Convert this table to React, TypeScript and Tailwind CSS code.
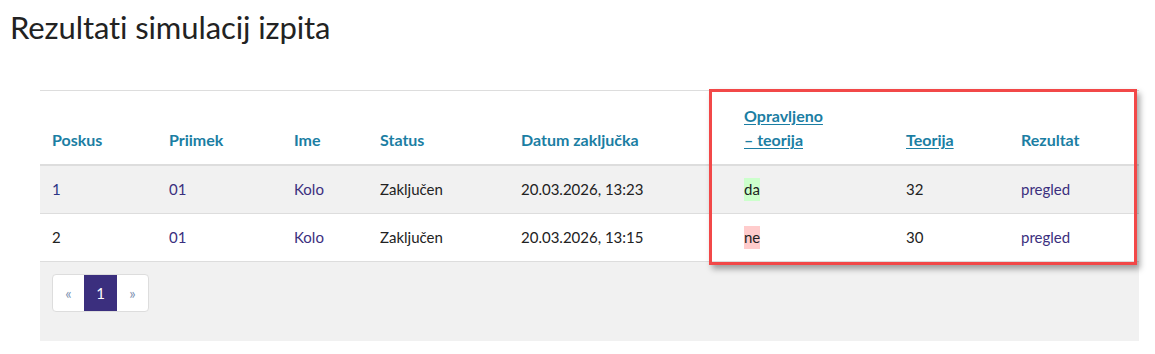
import React from "react";

const rows = [
  { poskus: "1", priimek: "01", ime: "Kolo", status: "Zaključen", datum: "20.03.2026, 13:23", opravljeno: "da", teorija: "32" },
  { poskus: "2", priimek: "01", ime: "Kolo", status: "Zaključen", datum: "20.03.2026, 13:15", opravljeno: "ne", teorija: "30" },
];

export default function App() {
  return (
    <div className="relative w-[1155px] h-[354px] bg-white text-[#222] font-['Lato','Noto_Sans',sans-serif]">
      <h1 className="pl-[10px] pt-[9px] text-[31px] leading-[36px] font-normal text-[#222] tracking-[-0.1px]">
        Rezultati simulacij izpita
      </h1>

      <div className="ml-[40px] mt-[45px] w-[1099px] bg-[#f1f1f1]">
        <table className="w-full table-fixed border-collapse text-[15px]">
          <colgroup>
            <col className="w-[117px]" />
            <col className="w-[125px]" />
            <col className="w-[86px]" />
            <col className="w-[141px]" />
            <col className="w-[223px]" />
            <col className="w-[162px]" />
            <col className="w-[115px]" />
            <col />
          </colgroup>
          <thead>
            <tr className="bg-white border-t border-[#ddd] border-b-2 border-b-[#ddd] text-left align-bottom text-[#1b7ea3] font-bold text-[16px]">
              <th className="px-3 pt-[13px] pb-3 leading-6">Poskus</th>
              <th className="px-3 pt-[13px] pb-3 leading-6">Priimek</th>
              <th className="px-3 pt-[13px] pb-3 leading-6">Ime</th>
              <th className="px-3 pt-[13px] pb-3 leading-6">Status</th>
              <th className="px-3 pt-[13px] pb-3 leading-6">Datum zaključka</th>
              <th className="px-3 pt-[13px] pb-3 leading-6">
                <a className="underline underline-offset-2">Opravljeno<br />– teorija</a>
              </th>
              <th className="px-3 pt-[13px] pb-3 leading-6">
                <a className="underline underline-offset-2">Teorija</a>
              </th>
              <th className="px-3 pt-[13px] pb-3 leading-6">Rezultat</th>
            </tr>
          </thead>
          <tbody>
            {rows.map((r, i) => (
              <tr key={r.poskus} className={`border-b border-[#ddd] ${i === 0 ? "bg-[#f1f1f1]" : "bg-white"}`}>
                <td className={`px-3 py-3 leading-[23px] ${i === 0 ? "text-[#2b3585]" : ""}`}>{r.poskus}</td>
                <td className="px-3 py-3 leading-[23px] text-[#3b2f7e]">{r.priimek}</td>
                <td className="px-3 py-3 leading-[23px] text-[#3b2f7e]">{r.ime}</td>
                <td className="px-3 py-3 leading-[23px]">{r.status}</td>
                <td className="px-3 py-3 leading-[23px]">{r.datum}</td>
                <td className="px-3 py-3 leading-[23px]">
                  <span className={`inline-block ${r.opravljeno === "da" ? "bg-[#ccffcc]" : "bg-[#ffcccc]"}`}>{r.opravljeno}</span>
                </td>
                <td className="px-3 py-3 leading-[23px]">{r.teorija}</td>
                <td className="px-3 py-3 leading-[23px] text-[#3b2f7e]">pregled</td>
              </tr>
            ))}
          </tbody>
        </table>

        <div className="h-[79px] px-3 pt-3">
          <div className="inline-flex h-[38px] rounded-[4px] border border-[#ddd] bg-white overflow-hidden">
            <span className="w-[31px] flex items-center justify-center text-[15px] text-[#7b8fb0]">«</span>
            <span className="w-[33px] flex items-center justify-center bg-[#3b2f7e] text-white text-[15px]">1</span>
            <span className="w-[31px] flex items-center justify-center text-[15px] text-[#7b8fb0]">»</span>
          </div>
        </div>
      </div>

      {/* red highlight box */}
      <div className="absolute left-[709px] top-[89px] w-[428px] h-[176px] border-[3px] border-[#f24848] shadow-[3px_4px_6px_rgba(0,0,0,0.35)]" />
    </div>
  );
}
